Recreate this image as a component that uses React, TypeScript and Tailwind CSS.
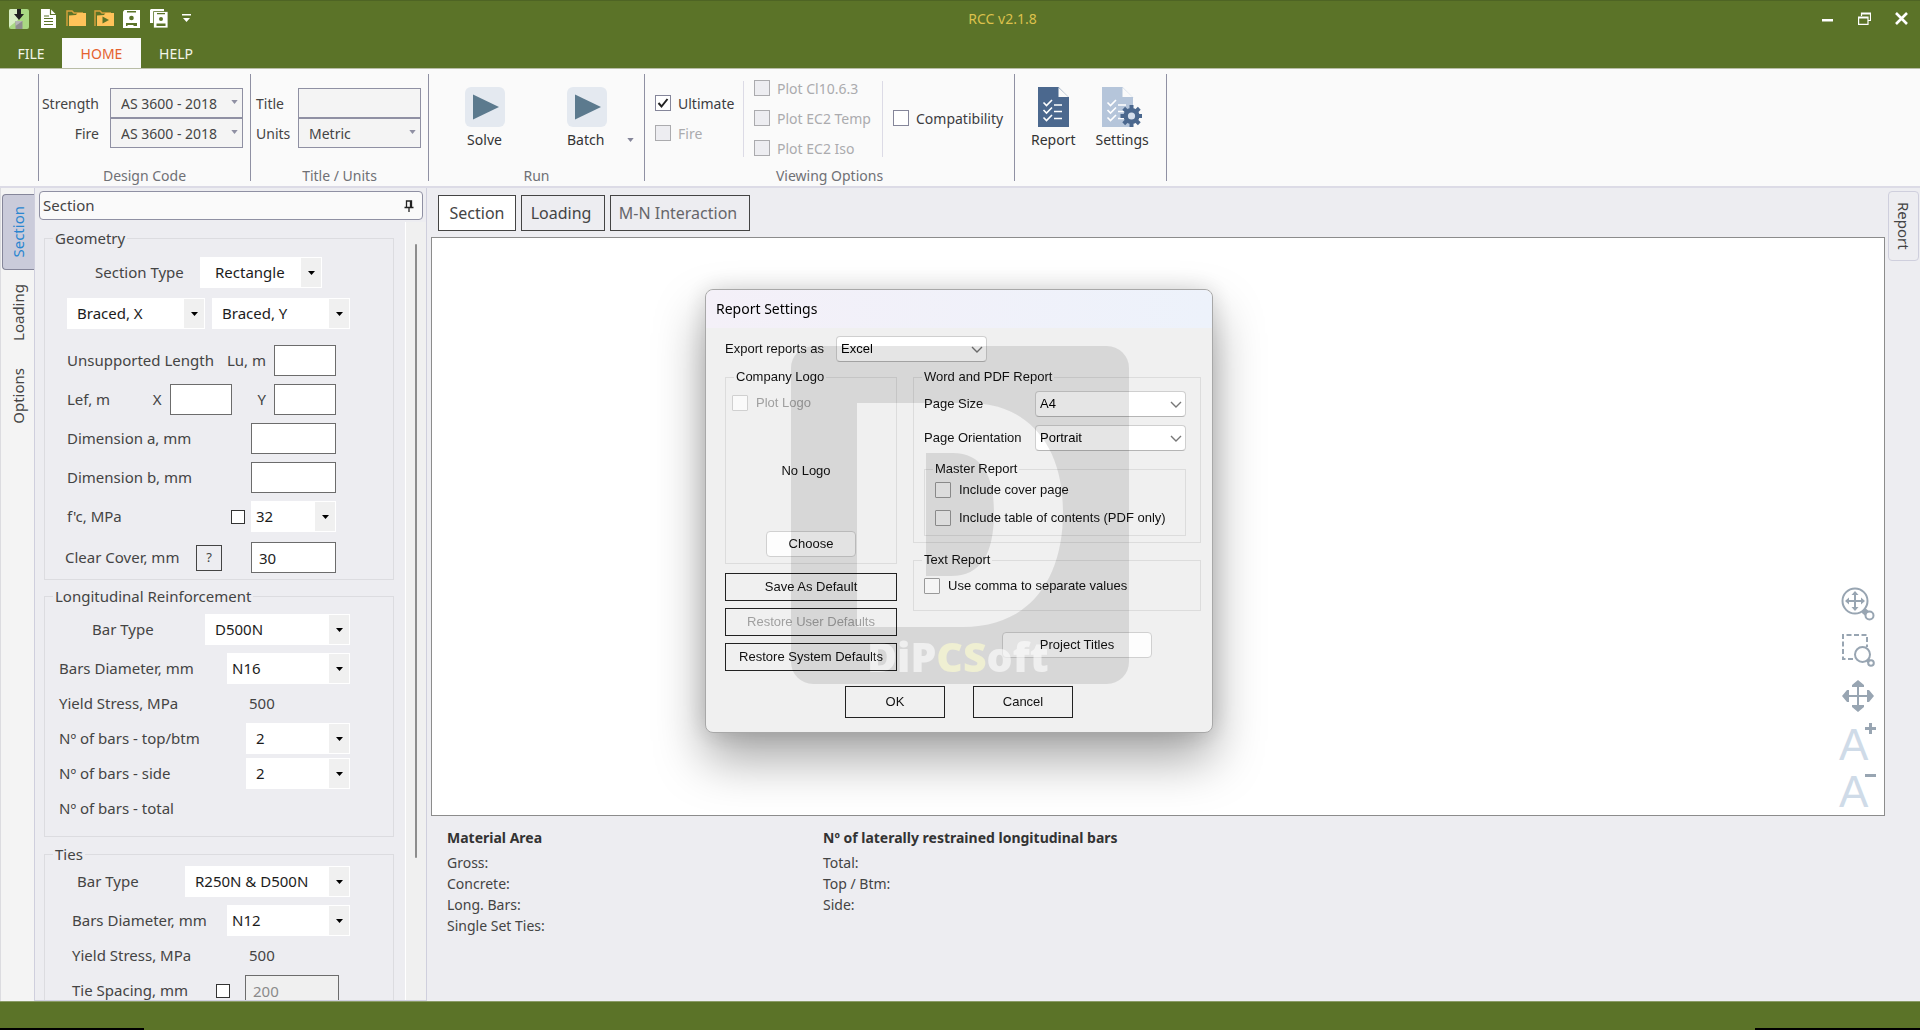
import type { ReactNode } from 'react'

function Caret(props: { className?: string }) {
  return (
    <svg viewBox="0 0 8 5" className={['h-[4px] w-[7px] fill-current', props.className || ''].join(' ')}>
      <path d="M0 0h8L4 5z" />
    </svg>
  )
}

/* ---------- ribbon ---------- */

function Separator() {
  return <div className="my-[5px] w-px shrink-0 bg-[#8f90a3]" />
}

function RibbonGroup(props: { caption: string; width: string; children: ReactNode }) {
  return (
    <section className={['flex shrink-0 flex-col', props.width].join(' ')}>
      <div className="flex flex-1">{props.children}</div>
      <div className="h-5 text-center text-[14px] leading-5 text-[#6f7075]">{props.caption}</div>
    </section>
  )
}

function RibbonSelect(props: { id: string; value: string; className?: string }) {
  return (
    <div className={['relative', props.className || ''].join(' ')}>
      <select
        id={props.id}
        className="h-[30px] w-full appearance-none border border-[#8f90a3] bg-[#f4f4f4] pl-[10px] text-[14px] text-[#444]"
      >
        <option>{props.value}</option>
      </select>
      <Caret className="pointer-events-none absolute top-3 right-[5px] text-[#8f90a3]" />
    </div>
  )
}

function RibbonCheck(props: { label: string; checked?: boolean; disabled?: boolean }) {
  return (
    <label
      className={[
        'flex h-[30px] items-center gap-[7px] text-[14px] whitespace-nowrap',
        props.disabled ? 'text-[#ababae]' : 'text-[#3c3c3f]',
      ].join(' ')}
    >
      <span className="relative flex">
        <input
          type="checkbox"
          defaultChecked={props.checked}
          disabled={props.disabled}
          className="peer size-4 appearance-none border border-[#85869a] bg-white disabled:border-[#ababae] disabled:bg-[#ededf1]"
        />
        <svg
          viewBox="0 0 16 16"
          className="pointer-events-none absolute inset-0 hidden size-4 peer-checked:block"
          fill="none"
          stroke="#222"
          strokeWidth="2"
        >
          <path d="M3.5 8l3 3.5L12.5 4" />
        </svg>
      </span>
      {props.label}
    </label>
  )
}

function PlayIcon() {
  return (
    <svg viewBox="0 0 40 40" className="size-10">
      <rect width="40" height="40" rx="6" fill="#e4e9f0" />
      <path d="M8 7.500L34 20 8 32.500z" fill="#5c7a8e" />
    </svg>
  )
}

function Checklist(props: { color: string }) {
  return (
    <g>
      <path d="M0 0H20.500L31 10.500V40H0z" fill={props.color} />
      <path d="M20 0v10.500h11" fill="#fafafa" stroke={props.color} />
      <g fill="none" stroke="#fff" strokeWidth="1.600">
        <path d="M5.500 15.500l3 3L14 13M16 18h8M5.500 23l3 3 5.500-5.500M16 24.500h8M5.500 30.500l3 3L14 28M16 31.500h8" />
      </g>
    </g>
  )
}

const teeth = [0, 45, 90, 135, 180, 225, 270, 315]

function Ribbon() {
  return (
    <div className="flex h-[120px] shrink-0 border-t border-b-2 border-t-[#b9bda6] border-b-[#dcdbe6] bg-[#fafafa]">
      <div className="w-[38px] shrink-0" />
      <Separator />
      <RibbonGroup caption="Design Code" width="w-[211px]">
        <div className="grid flex-1 grid-cols-[60px_133px] content-start items-center gap-x-[11px] pt-[19px] text-[14px] text-[#444]">
          <label htmlFor="strength" className="text-right">Strength</label>
          <RibbonSelect id="strength" value="AS 3600 - 2018" />
          <label htmlFor="fire-code" className="text-right">Fire</label>
          <RibbonSelect id="fire-code" value="AS 3600 - 2018" />
        </div>
      </RibbonGroup>
      <Separator />
      <RibbonGroup caption="Title / Units" width="w-[177px]">
        <div className="grid flex-1 grid-cols-[42px_123px] content-start items-center pt-[19px] pl-[5px] text-[14px] text-[#444]">
          <label htmlFor="title">Title</label>
          <input id="title" className="h-[30px] w-full border border-[#8f90a3] bg-[#f4f4f4] px-2" />
          <label htmlFor="units">Units</label>
          <RibbonSelect id="units" value="Metric" />
        </div>
      </RibbonGroup>
      <Separator />
      <RibbonGroup caption="Run" width="w-[215px]">
        <div className="flex flex-1 items-start gap-[60px] pt-[18px] pl-[33px] text-[14px] text-[#333]">
          <button type="button" className="flex w-[45px] flex-col items-center gap-[2px]">
            <PlayIcon />
            Solve
          </button>
          <button type="button" className="relative flex w-10 flex-col items-start gap-[2px]">
            <PlayIcon />
            Batch
            <Caret className="absolute right-[-27px] bottom-2 text-[#85869a]" />
          </button>
        </div>
      </RibbonGroup>
      <Separator />
      <RibbonGroup caption="Viewing Options" width="w-[369px]">
        <div className="flex flex-1 items-start pl-[10px]">
          <div className="w-[88px] pt-[19px]">
            <RibbonCheck label="Ultimate" checked />
            <RibbonCheck label="Fire" disabled />
          </div>
          <div className="mt-3 h-[76px] w-px bg-[#dcdbe6]" />
          <div className="w-[138px] pt-1 pl-[10px]">
            <RibbonCheck label="Plot Cl10.6.3" disabled />
            <RibbonCheck label="Plot EC2 Temp" disabled />
            <RibbonCheck label="Plot EC2 Iso" disabled />
          </div>
          <div className="mt-3 h-[76px] w-px bg-[#dcdbe6]" />
          <div className="pt-[34px] pl-[10px]">
            <RibbonCheck label="Compatibility" />
          </div>
        </div>
      </RibbonGroup>
      <Separator />
      <div className="flex w-[151px] shrink-0 items-start gap-5 pt-[18px] pl-4 text-[14px] text-[#333]">
        <button type="button" className="flex flex-col items-center gap-[2px]">
          <svg viewBox="0 0 31 40" className="h-10 w-[31px]">
            <Checklist color="#4b688e" />
          </svg>
          Report
        </button>
        <button type="button" className="flex flex-col items-center gap-[2px]">
          <svg viewBox="0 0 40 40" className="size-10">
            <Checklist color="#b5c5da" />
            <g transform="translate(29.500 29)" fill="#4b688e">
              {teeth.map((a) => (
                <rect key={a} x="-2" y="-11" width="4" height="6" transform={`rotate(${a})`} />
              ))}
              <circle r="8" />
              <circle r="3.600" fill="#d5dfec" />
            </g>
          </svg>
          Settings
        </button>
      </div>
      <Separator />
    </div>
  )
}

/* ---------- title bar ---------- */

function TitleBar() {
  return (
    <header className="shrink-0 border-t border-[#4e6424] bg-[#5b7328]">
      <div className="flex h-[37px] items-center pb-[2px] text-[14px]">
        <div className="flex w-[200px] items-center pl-[9px]">
          <svg viewBox="0 0 20 20" className="size-5">
            <rect width="20" height="20" rx="2" fill="#a9d982" />
            <path d="M0 2a2 2 0 0 1 2-2h7v11L0 18z" fill="#d8efc4" />
            <path d="M8 0h4v5h3l-5 6-5-6h3z" fill="#222" />
            <path d="M6.500 12h7v8h-7z" fill="#8e8e8e" />
            <path d="M6.500 12h7L6.500 17z" fill="#b5b5b5" />
          </svg>
          <button type="button" aria-label="New" className="ml-3">
            <svg viewBox="0 0 15 19" className="h-[19px] w-[15px]">
              <path d="M0 0h9.500L15 5.500V19H0z" fill="#fff" />
              <path d="M9.500 0v5.500H15M3 7h5M3 9.500h9M3 12.500h9M3 15.500h9" fill="none" stroke="#5b7328" strokeWidth="1.200" />
            </svg>
          </button>
          <button type="button" aria-label="Open" className="ml-[10px]">
            <svg viewBox="0 0 20 17" className="h-[17px] w-5">
              <path d="M1 16V1h5l2 2h9" fill="none" stroke="#d9a23c" strokeWidth="1.400" />
              <path d="M3 16V5.500L10 5l1.500-2H20v13z" fill="#ffc35a" />
            </svg>
          </button>
          <button type="button" aria-label="Open and run" className="ml-2">
            <svg viewBox="0 0 20 17" className="h-[17px] w-5">
              <path d="M1 16V1h5l2 2h9" fill="none" stroke="#d9a23c" strokeWidth="1.400" />
              <path d="M3 16V5.500L10 5l1.500-2H20v13z" fill="#ffc35a" />
              <path d="M8.500 6.500L15 10l-6.500 3.500z" fill="#5b7328" />
            </svg>
          </button>
          <button type="button" aria-label="Save" className="ml-[9px]">
            <svg viewBox="0 0 17 18" className="h-[18px] w-[17px]">
              <path d="M0 1.500L1.500 0H17v18H0z" fill="#fff" />
              <path d="M4 1h9v1.500H4zM3 13h11v3H3z" fill="#5b7328" />
              <path d="M4.500 15h6v1h-6z" fill="#fff" />
              <circle cx="8.500" cy="8" r="2.300" fill="#5b7328" />
            </svg>
          </button>
          <button type="button" aria-label="Save all" className="ml-[10px]">
            <svg viewBox="0 0 18 19" className="h-[19px] w-[18px]">
              <path d="M0 1l1-1h13v3H4v11H0z" fill="#fff" />
              <path d="M3.500 2.500H18V19H3.500z" fill="#fff" stroke="#5b7328" strokeWidth="0.800" />
              <path d="M7 4h8v1.200H7zM6.500 14.500h9V17h-9z" fill="#5b7328" />
              <circle cx="11" cy="10" r="2" fill="#5b7328" />
            </svg>
          </button>
          <button type="button" aria-label="Customize toolbar" className="ml-[14px]">
            <svg viewBox="0 0 9 9" className="size-[9px] fill-white">
              <path d="M0 0h9v1.500H0zM1 4h7L4.500 8z" />
            </svg>
          </button>
        </div>
        <h1 className="flex-1 text-center text-[#dcc14c]">RCC v2.1.8</h1>
        <div className="flex w-[115px] items-center gap-6 pl-4">
          <button type="button" aria-label="Minimize">
            <svg viewBox="0 0 13 13" className="size-[13px] fill-white">
              <path d="M1 7h11v2.500H1z" />
            </svg>
          </button>
          <button type="button" aria-label="Restore">
            <svg viewBox="0 0 13 13" className="size-[13px]" fill="none" stroke="#fff" strokeWidth="1.200">
              <path d="M3.500 4V1h9v7.500h-2.500M3 2h9.500M.6 5h9.400v7.400H.6zM.6 6h9.400" />
            </svg>
          </button>
          <button type="button" aria-label="Close">
            <svg viewBox="0 0 13 13" className="size-[13px]" fill="none" stroke="#fff" strokeWidth="2.600">
              <path d="M1 1l11 11M12 1L1 12" />
            </svg>
          </button>
        </div>
      </div>
      <nav className="flex h-[30px] text-[14px] text-[#f3f5e8]">
        <button type="button" className="w-[62px]">FILE</button>
        <button type="button" className="w-[79px] bg-[#fafafa] text-[#e5622f]">HOME</button>
        <button type="button" className="w-[70px]">HELP</button>
      </nav>
    </header>
  )
}

/* ---------- section panel ---------- */

function Group(props: { title: string; className?: string; children: ReactNode }) {
  return (
    <fieldset className={['w-[350px] border border-[#dcdce0] text-[15px] text-[#444]', props.className || ''].join(' ')}>
      <legend className="ml-2 h-6 px-[2px] leading-6">{props.title}</legend>
      {props.children}
    </fieldset>
  )
}

function Row(props: { className?: string; children: ReactNode }) {
  return <div className={['flex h-[31px] items-center whitespace-nowrap', props.className || ''].join(' ')}>{props.children}</div>
}

function Combo(props: { id: string; label?: string; value: string; className: string; pad?: string }) {
  return (
    <div className={['relative shrink-0', props.className].join(' ')}>
      <select
        id={props.id}
        aria-label={props.label}
        className={['h-[31px] w-full appearance-none bg-white text-[15px] text-[#1c1c1c]', props.pad || 'pl-[10px]'].join(' ')}
      >
        <option>{props.value}</option>
      </select>
      <span className="pointer-events-none absolute top-px right-px flex h-[29px] w-5 items-center justify-center bg-[#f0f0f0] text-black">
        <svg viewBox="0 0 7 4" className="h-1 w-[7px] fill-current">
          <path d="M0 0h7L3.500 4z" />
        </svg>
      </span>
    </div>
  )
}

function Box(props: { id: string; value?: string; className: string; disabled?: boolean }) {
  return (
    <input
      id={props.id}
      defaultValue={props.value}
      disabled={props.disabled}
      className={[
        'h-[31px] shrink-0 border border-[#6c6c6c] bg-white px-[7px] text-[15px] text-[#222] disabled:bg-[#f0f0f0] disabled:text-[#8a8a8a]',
        props.className,
      ].join(' ')}
    />
  )
}

function MiniCheck(props: { label: string; className: string }) {
  return (
    <input
      type="checkbox"
      aria-label={props.label}
      className={['size-[14px] shrink-0 appearance-none border border-[#333] bg-white', props.className].join(' ')}
    />
  )
}

function SectionPanel() {
  return (
    <div className="flex w-[393px] shrink-0 flex-col border-x border-b border-[#cfcfdd] bg-[#ededf1]">
      <div className="mt-[3px] mr-[3px] ml-[4px] flex h-[29px] shrink-0 items-center justify-between rounded border border-[#8f90a3] bg-[#fafafa] pr-2 pl-[3px] text-[15px] text-[#444]">
        <h2>Section</h2>
        <button type="button" aria-label="Pin">
          <svg viewBox="0 0 10 12" className="h-3 w-[10px]" fill="none" stroke="#222" strokeWidth="1.300">
            <path d="M2.500 7V1h5v6M0.500 7.500h9M5 7.500V12M6.500 1v6" />
          </svg>
        </button>
      </div>
      <div className="flex min-h-0 flex-1">
        <div className="flex min-h-0 flex-1 flex-col overflow-hidden pt-[6px] pl-[9px]">
          <Group title="Geometry" className="pb-[6px]">
            <div className="flex flex-col gap-2 pt-[7px]">
              <Row className="pr-[71px] pl-[50px]">
                <label htmlFor="section-type">Section Type</label>
                <Combo id="section-type" value="Rectangle" className="ml-auto w-[122px]" pad="pl-[15px]" />
              </Row>
              <Row className="mt-[2px] gap-[7px] pl-[22px]">
                <Combo id="braced-x" label="Braced X" value="Braced, X" className="w-[138px]" />
                <Combo id="braced-y" label="Braced Y" value="Braced, Y" className="w-[138px]" />
              </Row>
              <Row className="mt-2 pr-[57px] pl-[22px]">
                <span>Unsupported Length</span>
                <label htmlFor="lu" className="ml-auto">Lu, m</label>
                <Box id="lu" className="ml-2 w-[62px]" />
              </Row>
              <Row className="pr-[57px] pl-[22px]">
                <span>Lef, m</span>
                <label htmlFor="lef-x" className="ml-auto">X</label>
                <Box id="lef-x" className="ml-2 w-[62px]" />
                <label htmlFor="lef-y" className="ml-[26px]">Y</label>
                <Box id="lef-y" className="ml-2 w-[62px]" />
              </Row>
              <Row className="pr-[57px] pl-[22px]">
                <label htmlFor="dim-a">Dimension a, mm</label>
                <Box id="dim-a" className="ml-auto w-[85px]" />
              </Row>
              <Row className="pr-[57px] pl-[22px]">
                <label htmlFor="dim-b">Dimension b, mm</label>
                <Box id="dim-b" className="ml-auto w-[85px]" />
              </Row>
              <Row className="pr-[57px] pl-[22px]">
                <label htmlFor="fc">f'c, MPa</label>
                <MiniCheck label="Custom f'c" className="ml-auto" />
                <Combo id="fc" value="32" className="ml-[6px] w-[85px]" pad="pl-[5px]" />
              </Row>
              <Row className="mt-[2px] pr-[57px] pl-5">
                <label htmlFor="cover">Clear Cover, mm</label>
                <button type="button" className="ml-auto size-[26px] border border-[#444] text-[13px] leading-none">
                  ?
                </button>
                <Box id="cover" value="30" className="ml-[29px] w-[85px]" />
              </Row>
            </div>
          </Group>

          <Group title="Longitudinal Reinforcement" className="mt-1 pb-3">
            <div className="flex flex-col gap-1 pt-[6px]">
              <Row className="pr-[43px] pl-[47px]">
                <label htmlFor="long-type">Bar Type</label>
                <Combo id="long-type" value="D500N" className="ml-auto w-[145px]" />
              </Row>
              <Row className="mt-1 pr-[43px] pl-[14px]">
                <label htmlFor="long-dia">Bars Diameter, mm</label>
                <Combo id="long-dia" value="N16" className="ml-auto w-[123px]" pad="pl-[5px]" />
              </Row>
              <Row className="pl-[14px]">
                <span className="w-[190px]">Yield Stress, MPa</span>
                <span>500</span>
              </Row>
              <Row className="pr-[43px] pl-[14px]">
                <label htmlFor="bars-top">Nº of bars - top/btm</label>
                <Combo id="bars-top" value="2" className="ml-auto w-[104px]" />
              </Row>
              <Row className="pr-[43px] pl-[14px]">
                <label htmlFor="bars-side">Nº of bars - side</label>
                <Combo id="bars-side" value="2" className="ml-auto w-[104px]" />
              </Row>
              <Row className="pl-[14px]">Nº of bars - total</Row>
            </div>
          </Group>

          <Group title="Ties" className="mt-[5px] pb-3">
            <div className="flex flex-col gap-1">
              <Row className="pr-[43px] pl-8">
                <label htmlFor="tie-type">Bar Type</label>
                <Combo id="tie-type" value="R250N & D500N" className="ml-auto w-[165px]" />
              </Row>
              <Row className="mt-1 pr-[43px] pl-[27px]">
                <label htmlFor="tie-dia">Bars Diameter, mm</label>
                <Combo id="tie-dia" value="N12" className="ml-auto w-[123px]" pad="pl-[5px]" />
              </Row>
              <Row className="pl-[27px]">
                <span className="w-[177px]">Yield Stress, MPa</span>
                <span>500</span>
              </Row>
              <Row className="pr-[54px] pl-[27px]">
                <label htmlFor="spacing">Tie Spacing, mm</label>
                <MiniCheck label="Custom tie spacing" className="ml-auto" />
                <Box id="spacing" value="200" className="ml-[15px] w-[94px]" disabled />
              </Row>
            </div>
          </Group>
        </div>
        <div className="mt-[2px] w-[21px] shrink-0 border-l border-white bg-[#f0f0f0] pt-[22px] pl-[9px]">
          <div className="h-[614px] w-[2px] rounded-full bg-[#8d8d8d]" />
        </div>
      </div>
    </div>
  )
}

function SideTabs() {
  const tab = '[writing-mode:vertical-rl] rotate-180 text-[15px]'
  return (
    <nav className="flex w-[34px] shrink-0 flex-col items-end border-l border-[#dcdce0] bg-[#f4f4f4] pt-[6px]">
      <button
        type="button"
        className="flex h-[76px] w-8 items-center justify-center rounded-l border border-r-0 border-[#85869a] bg-[#cacbda] text-[#2a86d0]"
      >
        <span className={tab}>Section</span>
      </button>
      <button type="button" className="flex h-[84px] w-8 items-center justify-center text-[#444]">
        <span className={tab}>Loading</span>
      </button>
      <button type="button" className="flex h-[84px] w-8 items-center justify-center text-[#444]">
        <span className={tab}>Options</span>
      </button>
    </nav>
  )
}

/* ---------- drawing area ---------- */

function Tools() {
  return (
    <div className="flex flex-col items-center text-[#98a5b2]">
      <button type="button" aria-label="Zoom extents" className="flex h-[46px] items-center">
        <svg viewBox="0 0 34 34" className="size-[34px]" fill="none" stroke="currentColor" strokeWidth="2">
          <circle cx="14" cy="14" r="12.500" />
          <path d="M14 6v16M6 14h16" />
          <path d="M14 4l3.500 4h-7zM14 24l3.500-4h-7zM4 14l4-3.500v7zM24 14l-4-3.500v7z" fill="currentColor" stroke="none" />
          <path d="M22.500 23.500l6 5" strokeWidth="6" />
          <circle cx="28.500" cy="28.500" r="4" fill="#fff" />
        </svg>
      </button>
      <button type="button" aria-label="Zoom window" className="flex h-[46px] items-center">
        <svg viewBox="0 0 34 34" className="size-[34px]" fill="none" stroke="currentColor" strokeWidth="2">
          <path d="M12 26H2V2h24v12" strokeDasharray="5 2.500" />
          <circle cx="21.500" cy="21.500" r="7.500" fill="#fff" />
          <path d="M26.500 27l3 3" strokeWidth="4" />
          <circle cx="30" cy="30" r="2.800" fill="#fff" />
        </svg>
      </button>
      <button type="button" aria-label="Pan" className="flex h-[46px] items-center">
        <svg viewBox="0 0 32 32" className="size-8 fill-current">
          <path d="M15 7h2v18h-2zM7 15h18v2H7z" />
          <path d="M16 0l6 5v2H10V5zM16 32l6-5v-2H10v2zM0 16l5-6h2v12H5zM32 16l-5-6h-2v12h2z" />
        </svg>
      </button>
      <button type="button" aria-label="Larger text" className="flex h-[47px] w-[38px] items-start pt-1">
        <span className="font-['Liberation_Sans',sans-serif] text-[44px] leading-[43px] text-[#cfdbe8]">A</span>
        <svg viewBox="0 0 11 11" className="-ml-[3px] size-[11px] shrink-0" fill="currentColor">
          <path d="M4 0h3v4h4v3H7v4H4V7H0V4h4z" />
        </svg>
      </button>
      <button type="button" aria-label="Smaller text" className="flex h-[49px] w-[38px] items-start pt-1">
        <span className="font-['Liberation_Sans',sans-serif] text-[44px] leading-[43px] text-[#cfdbe8]">A</span>
        <svg viewBox="0 0 11 11" className="-ml-[3px] size-[11px] shrink-0" fill="currentColor">
          <path d="M0 4h11v3H0z" />
        </svg>
      </button>
    </div>
  )
}

function Workspace() {
  return (
    <main className="flex min-w-0 flex-1 flex-col pl-1">
      <div className="flex gap-[5px] pt-[7px] pb-[6px] pl-[7px] text-[16px] text-[#444]">
        <button type="button" className="h-9 w-[78px] border border-[#444] bg-white">Section</button>
        <button type="button" className="h-9 w-[84px] border border-[#444] pr-1">Loading</button>
        <button type="button" className="h-9 w-[140px] border border-[#444] pr-1 text-[#66666a]">M-N Interaction</button>
      </div>
      <div className="flex flex-1 items-end justify-end border border-[#8c8c8c] bg-white pr-[7px]">
        <Tools />
      </div>
      <div className="flex h-[185px] shrink-0 pt-[11px] pl-4 text-[14px] leading-[21px] text-[#444]">
        <div className="w-[376px]">
          <h3 className="mb-1 font-bold text-[#333]">Material Area</h3>
          <p>Gross:</p>
          <p>Concrete:</p>
          <p>Long. Bars:</p>
          <p>Single Set Ties:</p>
        </div>
        <div>
          <h3 className="mb-1 font-bold text-[#333]">Nº of laterally restrained longitudinal bars</h3>
          <p>Total:</p>
          <p>Top / Btm:</p>
          <p>Side:</p>
        </div>
      </div>
    </main>
  )
}

/* ---------- report settings dialog ---------- */

function DialogGroup(props: { title: string; className?: string; children: ReactNode }) {
  return (
    <fieldset className={['border border-[#dcdcdc]', props.className || ''].join(' ')}>
      <legend className="ml-2 h-4 px-[2px] leading-4">{props.title}</legend>
      {props.children}
    </fieldset>
  )
}

function DialogSelect(props: { id: string; value: string; className?: string }) {
  return (
    <div className={['relative w-[151px]', props.className || ''].join(' ')}>
      <select
        id={props.id}
        className="h-[26px] w-full appearance-none rounded-sm border border-[#cfcfcf] border-b-[#b5b5b5] bg-white pl-[4px] text-[13px] text-black"
      >
        <option>{props.value}</option>
      </select>
      <svg
        viewBox="0 0 12 7"
        className="pointer-events-none absolute top-[10px] right-[4px] h-[7px] w-3"
        fill="none"
        stroke="#777"
        strokeWidth="1.400"
      >
        <path d="M1 1l5 5 5-5" />
      </svg>
    </div>
  )
}

function DialogCheck(props: { label: string; disabled?: boolean; className?: string }) {
  return (
    <label className={['flex h-[17px] items-center gap-2 whitespace-nowrap', props.disabled ? 'text-[#a0a0a0]' : '', props.className || ''].join(' ')}>
      <input
        type="checkbox"
        disabled={props.disabled}
        className="size-4 shrink-0 appearance-none rounded-[1px] border border-[#999] bg-[#f5f5f5] disabled:border-[#d0d0d0] disabled:bg-[#fafafa]"
      />
      {props.label}
    </label>
  )
}

// overlay blending keeps the dark labels under the word readable
function Watermark() {
  return (
    <div className="pointer-events-none absolute top-[56px] left-[85px] size-[338px]">
      <svg viewBox="0 0 338 338" className="size-full" fill="#000" fillOpacity="0.1" fillRule="evenodd">
        <path d="M22 0H316A22 22 0 0 1 338 22V316A22 22 0 0 1 316 338H22A22 22 0 0 1 0 316V22A22 22 0 0 1 22 0zM66 57V281H172C238 281 272 234 272 166C272 98 236 57 178 57zM135 107H162C190 107 203 128 203 166C203 208 190 230 160 230H135z" />
      </svg>
      <div className="absolute top-[290px] left-[76px] font-['Open_Sans',sans-serif] text-[41px] leading-[40px] font-extrabold text-white opacity-60 mix-blend-overlay">
        DiP<span className="text-[#ffff66]">CS</span>oft
      </div>
    </div>
  )
}

function ReportSettings() {
  const flat = 'border border-[#222]'
  return (
    <div className="pointer-events-none fixed inset-0 flex items-center justify-center pr-[2px] pb-2">
      <div
        role="dialog"
        aria-label="Report Settings"
        className="pointer-events-auto relative w-[508px] rounded-lg border border-[#a8a8a8] bg-[#f0f0f0] font-['Liberation_Sans',sans-serif] text-[13px] text-[#111] shadow-[0_26px_50px_rgba(0,0,0,0.35),0_0_24px_rgba(0,0,0,0.14)]"
      >
        <h2 className="rounded-t-lg bg-gradient-to-r from-[#f4f0f8] to-[#edf2fb] pl-[10px] font-['Noto_Sans',sans-serif] text-[14px] leading-[38px] text-black">
          Report Settings
        </h2>
        <div className="pt-2 pr-[11px] pb-[14px] pl-[19px]">
          <div className="flex items-center">
            <label htmlFor="export" className="w-[111px]">Export reports as</label>
            <DialogSelect id="export" value="Excel" />
          </div>
          <div className="mt-[7px] flex gap-4">
            <div className="flex w-[172px] flex-col">
              <DialogGroup title="Company Logo" className="h-[195px]">
                <div className="flex flex-col pt-[9px] pl-[6px]">
                  <DialogCheck label="Plot Logo" disabled />
                  <div className="flex h-[120px] items-center justify-center pr-4">No Logo</div>
                  <button type="button" className="mr-[6px] h-[26px] w-[90px] self-center rounded border border-[#d0d0d0] bg-[#fdfdfd]">
                    Choose
                  </button>
                </div>
              </DialogGroup>
              <div className="mt-[9px] flex flex-col gap-[7px]">
                <button type="button" className={`h-7 ${flat}`}>Save As Default</button>
                <button type="button" disabled className={`h-7 text-[#a0a0a0] ${flat}`}>Restore User Defaults</button>
                <button type="button" className={`h-7 ${flat}`}>Restore System Defaults</button>
              </div>
            </div>
            <div className="flex flex-1 flex-col">
              <DialogGroup title="Word and PDF Report" className="pb-[6px]">
                <div className="flex flex-col pt-[6px] pr-[14px] pl-[10px]">
                  <div className="flex items-center justify-between">
                    <label htmlFor="page-size">Page Size</label>
                    <DialogSelect id="page-size" value="A4" />
                  </div>
                  <div className="mt-2 flex items-center justify-between">
                    <label htmlFor="orientation">Page Orientation</label>
                    <DialogSelect id="orientation" value="Portrait" />
                  </div>
                  <DialogGroup title="Master Report" className="mt-[10px] pb-[9px]">
                    <div className="flex flex-col gap-[11px] pt-1 pl-[10px]">
                      <DialogCheck label="Include cover page" />
                      <DialogCheck label="Include table of contents (PDF only)" />
                    </div>
                  </DialogGroup>
                </div>
              </DialogGroup>
              <DialogGroup title="Text Report" className="mt-[9px] pb-4">
                <DialogCheck label="Use comma to separate values" className="mt-[9px] ml-[10px]" />
              </DialogGroup>
              <button type="button" className="mt-[21px] ml-[89px] h-[26px] w-[150px] rounded border border-[#d0d0d0] bg-[#fdfdfd]">
                Project Titles
              </button>
            </div>
          </div>
          <div className="mt-[15px] flex justify-center gap-7 pr-2">
            <button type="button" className={`h-8 w-[100px] ${flat}`}>OK</button>
            <button type="button" className={`h-8 w-[100px] ${flat}`}>Cancel</button>
          </div>
        </div>
        <Watermark />
      </div>
    </div>
  )
}

export default function App() {
  return (
    <div className="flex h-screen flex-col overflow-hidden bg-[#ededf1] font-['Noto_Sans','Open_Sans',sans-serif]">
      <TitleBar />
      <Ribbon />
      <div className="flex min-h-0 flex-1">
        <SideTabs />
        <SectionPanel />
        <Workspace />
        <aside className="w-[35px] shrink-0 pt-[3px] pl-[3px]">
          <button
            type="button"
            className="flex h-[70px] w-[31px] items-center justify-center rounded border border-[#cfcfdd] text-[15px] text-[#444] [writing-mode:vertical-rl]"
          >
            Report
          </button>
        </aside>
      </div>
      <footer className="flex h-[29px] shrink-0 items-end justify-between border-t border-[#8a9b66] bg-[#5b7328]">
        <div className="h-[2px] w-36 bg-black" />
        <div className="h-[2px] w-[165px] bg-black" />
      </footer>
      <ReportSettings />
    </div>
  )
}
